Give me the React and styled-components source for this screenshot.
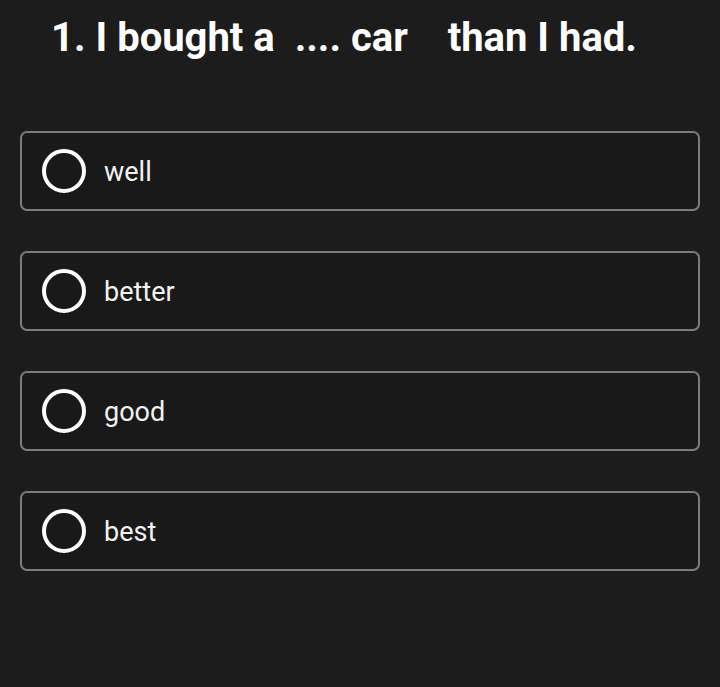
import React from "react";
import styled, { createGlobalStyle } from "styled-components";

const GlobalStyle = createGlobalStyle`
  html, body {
    margin: 0;
    padding: 0;
    background: #1c1c1c;
  }
  body {
    font-family: Roboto, "Noto Sans", sans-serif;
    color: #ffffff;
  }
`;

const options = ["well", "better", "good", "best"];

const App = () => {
  return (
    <>
      <GlobalStyle />
      <Wrapper>
        <Question>1. I bought a&nbsp; .... car &nbsp;&nbsp; than I had.</Question>
        <OptionList>
          {options.map((option) => (
            <Option key={option}>
              <Radio />
              <OptionLabel>{option}</OptionLabel>
            </Option>
          ))}
        </OptionList>
      </Wrapper>
    </>
  );
};

const Wrapper = styled.div`
  width: 720px;
  height: 687px;
  box-sizing: border-box;
  padding: 13px 20px 0 20px;
  background: #1c1c1c;
`;

const Question = styled.h1`
  margin: 0;
  padding-left: 31px;
  font-size: 40px;
  font-weight: 700;
  line-height: 50px;
  white-space: nowrap;
`;

const OptionList = styled.div`
  display: flex;
  flex-direction: column;
  gap: 40px;
  margin-top: 68px;
`;

const Option = styled.div`
  display: flex;
  align-items: center;
  gap: 18px;
  height: 80px;
  box-sizing: border-box;
  padding-left: 20px;
  border: 2px solid #7b7b80;
  border-radius: 7px;
  background: #191919;
`;

const Radio = styled.span`
  width: 44px;
  height: 44px;
  box-sizing: border-box;
  border: 4px solid #ffffff;
  border-radius: 50%;
  flex-shrink: 0;
`;

const OptionLabel = styled.span`
  padding-top: 2px;
  font-size: 27px;
  font-weight: 400;
  color: #f2f2f2;
`;

export default App;
